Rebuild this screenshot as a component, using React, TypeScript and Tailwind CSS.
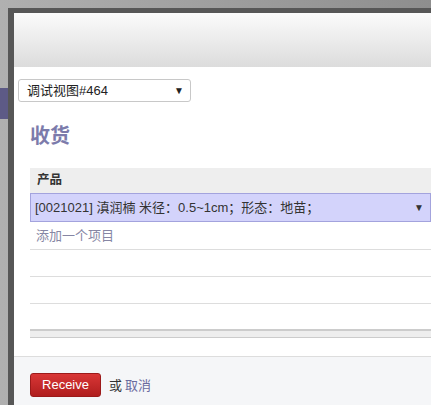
import React from "react";

const font = { fontFamily: '"Liberation Sans", Arial, "Noto Sans CJK SC", sans-serif' };

export default function App() {
  return (
    <div
      className="relative w-[431px] h-[405px] overflow-hidden bg-gradient-to-r from-[#b0b0b0] to-[#8e8e8e] pt-[8px] pl-[8px]"
      style={font}
    >
      <div className="absolute left-0 top-[88px] w-[8px] h-[31px] bg-[#5d5a86]" />
      <div className="h-[397px] border-t-[5px] border-l-[6px] border-[#575757] bg-white flex flex-col">
        <div className="h-[54px] shrink-0 bg-gradient-to-b from-[#fbfbfb] to-[#dcdcdc]" />
        <div className="flex flex-col pl-[4px]">
          <div className="mt-[12px] w-[173px] h-[23px] border border-[#c8c8c8] rounded-[3px] flex items-center justify-between pl-[8px] pr-[6px] text-[13px] text-[#222]">
            <span>调试视图#464</span>
            <span className="text-[10px]">▼</span>
          </div>
          <div className="pl-[12px] mt-[19px] h-[30px] flex items-center text-[20px] font-bold text-[#7c7bab]">
            收货
          </div>
          <div className="ml-[12px] mt-[17px] flex flex-col">
            <div className="h-[25px] bg-[#eeeeee] flex items-center pl-[7px] text-[12.5px] font-bold text-[#333]">
              产品
            </div>
            <div className="h-[29px] bg-[#d3d3fb] border border-[#a3a3dd] flex items-center justify-between pl-[4px] pr-[6px] text-[13px] text-[#333]">
              <span>[0021021] 滇润楠 米径：0.5~1cm；形态：地苗；</span>
              <span className="text-[10px]">▼</span>
            </div>
            <div className="h-[28px] border-b border-[#dddddd] flex items-center pl-[6px] text-[13px] text-[#8686a4]">
              添加一个项目
            </div>
            <div className="h-[27px] border-b border-[#dddddd]" />
            <div className="h-[27px] border-b border-[#dddddd]" />
            <div className="mt-[25px] h-[9px] bg-[#eeeeee] border-t-[2px] border-b border-[#cccccc]" />
          </div>
        </div>
        <div className="mt-[18px] flex-1 bg-[#f5f6f8] border-t border-[#dddddd] flex items-start pl-[16px] pt-[16px]">
          <div className="w-[71px] h-[24px] rounded-[3px] bg-gradient-to-b from-[#d93636] to-[#b01e1e] border border-[#9c1a1a] flex items-center justify-center text-white text-[13px]">
            Receive
          </div>
          <span className="ml-[8px] mt-[3px] text-[13px] text-[#333]">或</span>
          <span className="ml-[3px] mt-[3px] text-[13px] text-[#6b6b9e]">取消</span>
        </div>
      </div>
    </div>
  );
}
